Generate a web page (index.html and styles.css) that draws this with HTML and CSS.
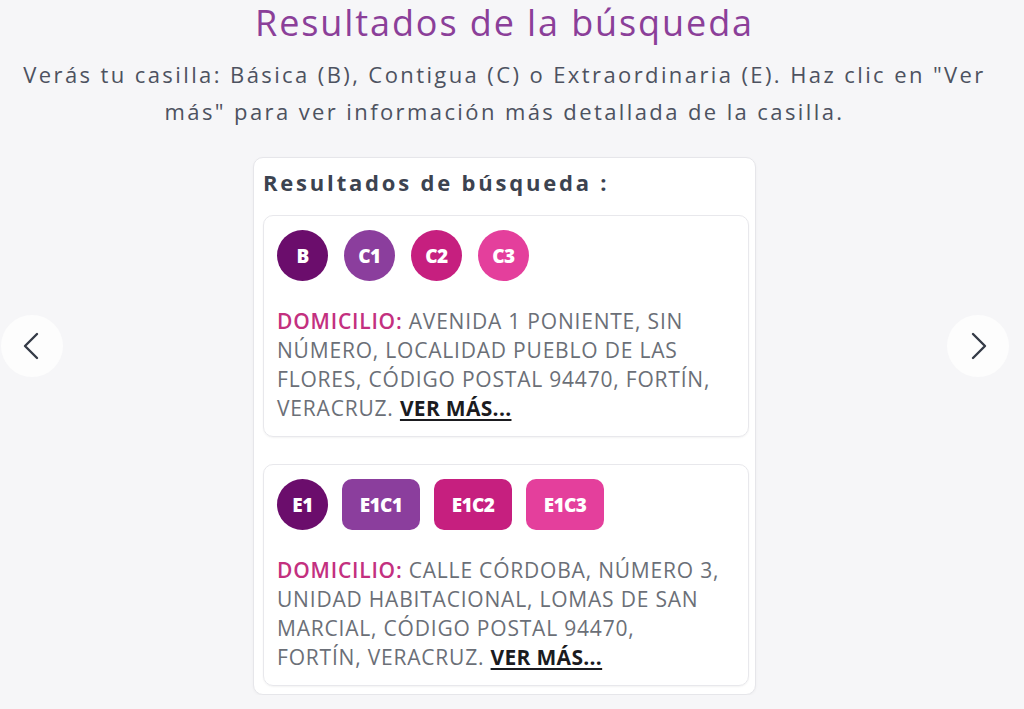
FILE: index.html
```html
<!DOCTYPE html>
<html lang="es">
<head>
<meta charset="utf-8">
<title>Resultados de la búsqueda</title>
<link rel="stylesheet" href="styles.css">
</head>
<body>
<main class="page">
  <h1 class="title">Resultados de la búsqueda</h1>
  <p class="lead">Verás tu casilla: Básica (B), Contigua (C) o Extraordinaria (E). Haz clic en "Ver más" para ver información más detallada de la casilla.</p>

  <section class="carousel">
    <button class="nav nav-prev" aria-label="Anterior">
      <svg width="24" height="28" viewBox="0 0 24 28"><polyline points="17,2 5,14 17,26" fill="none" stroke="#343a46" stroke-width="2.4" stroke-linecap="round" stroke-linejoin="round"/></svg>
    </button>

    <div class="results">
      <h2 class="results-title">Resultados de búsqueda :</h2>

      <article class="item">
        <div class="badges">
          <span class="badge round c-b">B</span>
          <span class="badge round c-c1">C1</span>
          <span class="badge round c-c2">C2</span>
          <span class="badge round c-c3">C3</span>
        </div>
        <p class="address"><span class="label">DOMICILIO:</span> AVENIDA 1 PONIENTE, SIN NÚMERO, LOCALIDAD PUEBLO DE LAS FLORES, CÓDIGO POSTAL 94470, FORTÍN, VERACRUZ. <a class="more" href="#">VER MÁS...</a></p>
      </article>

      <article class="item">
        <div class="badges wide-gap">
          <span class="badge round c-b">E1</span>
          <span class="badge rect c-c1">E1C1</span>
          <span class="badge rect c-c2">E1C2</span>
          <span class="badge rect c-c3">E1C3</span>
        </div>
        <p class="address"><span class="label">DOMICILIO:</span> CALLE CÓRDOBA, NÚMERO 3, UNIDAD HABITACIONAL, LOMAS DE SAN MARCIAL, CÓDIGO POSTAL 94470, FORTÍN, VERACRUZ. <a class="more" href="#">VER MÁS...</a></p>
      </article>
    </div>

    <button class="nav nav-next" aria-label="Siguiente">
      <svg width="24" height="28" viewBox="0 0 24 28"><polyline points="7,2 19,14 7,26" fill="none" stroke="#343a46" stroke-width="2.4" stroke-linecap="round" stroke-linejoin="round"/></svg>
    </button>
  </section>
</main>
</body>
</html>
```

FILE: styles.css
```css
html, body {
  margin: 0;
  padding: 0;
}

body {
  background: #f6f6f8;
  font-family: "Open Sans", "Noto Sans", sans-serif;
  color: #4b5160;
}

.page {
  text-align: center;
  padding-right: 15px;
}

.title {
  margin: 0;
  padding-top: 2px;
  font-size: 36px;
  line-height: 42px;
  font-weight: 400;
  letter-spacing: 1.9px;
  color: #8b3f99;
}

.lead {
  margin: 12px auto 0;
  width: 990px;
  font-size: 22px;
  line-height: 37px;
  letter-spacing: 2.4px;
  color: #4d5260;
}

.carousel {
  position: relative;
  margin-top: 27px;
  display: flex;
  justify-content: center;
}

.nav {
  position: absolute;
  top: 158px;
  width: 62px;
  height: 62px;
  border: none;
  border-radius: 50%;
  background: #fdfdfd;
  display: flex;
  align-items: center;
  justify-content: center;
  padding: 0;
  cursor: pointer;
}

.nav-prev { left: 1px; }
.nav-next { right: 0; }

.results {
  width: 503px;
  box-sizing: border-box;
  background: #ffffff;
  border: 1px solid #e6e6ea;
  border-radius: 10px;
  padding: 9px 6px 8px 9px;
  text-align: left;
  box-shadow: 0 1px 3px rgba(0,0,0,0.04);
}

.results-title {
  margin: 0 0 18px;
  font-size: 22px;
  line-height: 30px;
  font-weight: 700;
  letter-spacing: 2.8px;
  color: #3c4350;
}

.item {
  border: 1px solid #e8e8ec;
  border-radius: 10px;
  padding: 14px 25px 13px 13px;
  box-shadow: 0 1px 2px rgba(0,0,0,0.05);
}

.item + .item {
  margin-top: 27px;
}

.badges {
  display: flex;
  gap: 16px;
}

.badges.wide-gap {
  gap: 14px;
}

.badge {
  height: 51px;
  display: flex;
  align-items: center;
  justify-content: center;
  color: #ffffff;
  font-weight: 800;
  font-size: 19px;
  letter-spacing: -0.6px;
}

.badge.round {
  width: 51px;
  border-radius: 50%;
}

.badge.rect {
  width: 78px;
  border-radius: 10px;
}

.c-b  { background: #6b0d6c; }
.c-c1 { background: #8b3e9d; }
.c-c2 { background: #c61f7f; }
.c-c3 { background: #e43f9c; }

.address {
  margin: 26px 0 0;
  font-size: 21px;
  line-height: 29px;
  letter-spacing: 0.8px;
  color: #6b6f77;
}

.label {
  color: #c3307f;
  font-weight: 600;
}

.more {
  color: #1b1b1f;
  font-weight: 700;
  letter-spacing: 0.3px;
  text-decoration: underline;
  text-underline-offset: 3px;
}
```
